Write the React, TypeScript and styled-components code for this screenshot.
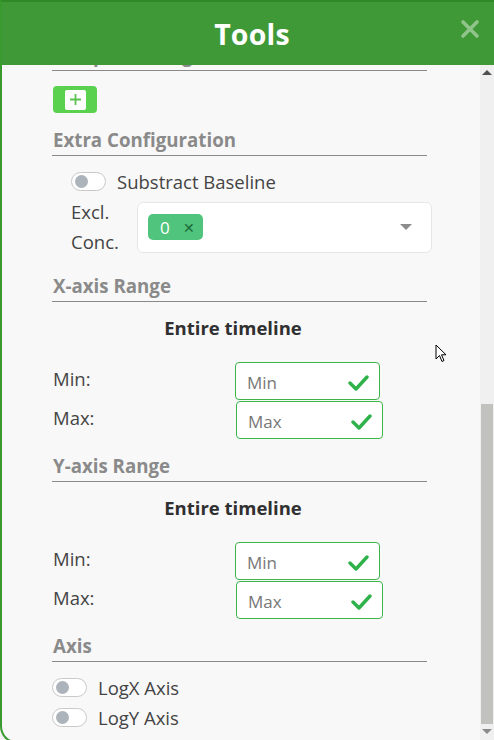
import React, { useLayoutEffect, useRef } from "react";
import styled, { createGlobalStyle } from "styled-components";

const Global = createGlobalStyle`
  html, body { margin: 0; padding: 0; overflow: hidden; background: #f4f4f4; }
  body { font-family: "Open Sans", "Noto Sans", sans-serif; }
  * { box-sizing: border-box; }
`;

const Panel = styled.div`
  width: 494px;
  height: 744px;
  display: flex;
  flex-direction: column;
  border-left: 2px solid #3a9a30;
  border-top: 2px solid #2f8a25;
  border-bottom: 2px solid #3a9a30;
  border-bottom-left-radius: 18px;
  background: #f8f8f8;
  overflow: hidden;
  position: relative;
`;

const Header = styled.div`
  height: 63px;
  flex: none;
  background: #409937;
  display: flex;
  align-items: center;
  justify-content: center;
  position: relative;
`;

const Title = styled.h1`
  margin: 0;
  color: #ffffff;
  font-family: "Open Sans", sans-serif;
  font-weight: 700;
  font-size: 28.5px;
  letter-spacing: 0.2px;
  transform: translateX(4px);
`;

const Close = styled.button`
  position: absolute;
  right: 12px;
  top: 15px;
  width: 24px;
  height: 24px;
  padding: 0;
  border: none;
  background: none;
  display: flex;
  align-items: center;
  justify-content: center;
`;

const Body = styled.div`
  flex: 1;
  display: flex;
  min-height: 0;
`;

const Scroller = styled.div`
  flex: 1;
  overflow: hidden;
  padding: 0 53px 0 50px;
`;

const Track = styled.div`
  width: 14px;
  flex: none;
  background: #f0f0f0;
  display: flex;
  flex-direction: column;
  align-items: center;
  padding-bottom: 4px;
`;

const Arrow = styled.div<{ $down?: boolean }>`
  width: 14px;
  height: 14px;
  flex: none;
  display: flex;
  align-items: center;
  justify-content: center;
  &::after {
    content: "";
    border-left: 5px solid transparent;
    border-right: 5px solid transparent;
    ${(p) => (p.$down ? "border-top: 5px solid #8a8a8a;" : "border-bottom: 5px solid #505050;")}
  }
`;

const Spacer = styled.div`
  flex: 1;
`;

const Thumb = styled.div`
  width: 12px;
  height: 320px;
  background: #c1c1bd;
  flex: none;
`;

const Section = styled.h2<{ $mt: number }>`
  margin: ${(p) => p.$mt}px 0 0;
  font-size: 18.7px;
  line-height: 24px;
  font-weight: 700;
  color: #8a8a8a;
  padding: 3px 0 3px 1px;
  border-bottom: 1px solid #8a8a8a;
  white-space: nowrap;
`;

const AddButton = styled.button`
  margin-top: 15px;
  width: 44px;
  height: 27px;
  border: none;
  border-radius: 4px;
  background: #5bd150;
  display: flex;
  align-items: center;
  justify-content: center;
  padding: 0;
  margin-left: 1px;
`;

const AddInner = styled.span`
  width: 21px;
  height: 20px;
  border-radius: 2px;
  background: #ffffff;
  display: flex;
  align-items: center;
  justify-content: center;
`;

const SwitchRow = styled.label<{ $mt: number; $indent?: number }>`
  margin-top: ${(p) => p.$mt}px;
  margin-left: ${(p) => p.$indent ?? 0}px;
  display: flex;
  align-items: center;
  gap: 11px;
  height: 24px;
  font-size: 18.5px;
  color: #444;
`;

const Switch = styled.span`
  width: 35px;
  height: 19px;
  flex: none;
  border-radius: 10px;
  border: 1px solid #c9c9c9;
  background: #ffffff;
  display: flex;
  align-items: center;
  padding-left: 3px;
  &::before {
    content: "";
    width: 13px;
    height: 13px;
    border-radius: 50%;
    background: #adb3bb;
  }
`;

const ExclRow = styled.div`
  margin-top: 4px;
  margin-left: 19px;
  margin-right: -5px;
  display: flex;
  align-items: center;
  gap: 12px;
`;

const ExclLabel = styled.div`
  font-size: 18.5px;
  line-height: 30px;
  color: #444;
  width: 54px;
`;

const Select = styled.div`
  flex: 1;
  height: 51px;
  background: #ffffff;
  border: 1px solid #e6e6e6;
  border-radius: 6px;
  display: flex;
  align-items: center;
  padding: 0 19px 0 10px;
`;

const Chip = styled.span`
  width: 55px;
  height: 26px;
  border-radius: 5px;
  background: #50c37c;
  display: flex;
  align-items: center;
  padding-left: 12px;
  gap: 13px;
  color: #ffffff;
  font-size: 17px;
`;

const ChipX = styled.span`
  color: #1c6a37;
  font-size: 14px;
`;

const Caret = styled.span`
  margin-left: auto;
  border-left: 6px solid transparent;
  border-right: 6px solid transparent;
  border-top: 6px solid #8c8c8c;
`;

const Subtitle = styled.div`
  margin-top: 14px;
  text-align: center;
  font-size: 18.5px;
  line-height: 24px;
  font-weight: 700;
  color: #303030;
  padding-right: 13px;
`;

const RangeGrid = styled.div`
  margin-top: 22px;
  display: grid;
  grid-template-columns: 183px 1fr;
  row-gap: 1px;
  align-items: center;
`;

const RangeLabel = styled.div`
  font-size: 18.5px;
  color: #444;
  padding-left: 1px;
  margin-bottom: 5px;
`;

const InputBox = styled.div<{ $w: number; $dx: number }>`
  width: ${(p) => p.$w}px;
  margin-left: ${(p) => p.$dx}px;
  height: 38px;
  border: 1px solid #3cb44a;
  border-radius: 4px;
  background: #ffffff;
  display: flex;
  align-items: center;
  padding: 3px 10px 0 11px;
  font-size: 17px;
  color: #777;
`;

const Check = styled.span`
  margin-left: auto;
  display: flex;
`;

const Cursor = styled.svg`
  position: absolute;
  left: 433px;
  top: 342px;
`;

const CheckIcon = () => (
  <Check>
    <svg width="21" height="17" viewBox="0 0 21 17">
      <path d="M2 9 L8 15 L19 3" fill="none" stroke="#2fb24a" strokeWidth="3.4" strokeLinecap="round" strokeLinejoin="round" />
    </svg>
  </Check>
);

const Range = ({ sizes }: { sizes: [number, number, number, number] }) => (
  <RangeGrid>
    <RangeLabel>Min:</RangeLabel>
    <InputBox $w={sizes[0]} $dx={sizes[1]}>
      Min
      <CheckIcon />
    </InputBox>
    <RangeLabel>Max:</RangeLabel>
    <InputBox $w={sizes[2]} $dx={sizes[3]}>
      Max
      <CheckIcon />
    </InputBox>
  </RangeGrid>
);

export default function App() {
  const ref = useRef<HTMLDivElement>(null);
  useLayoutEffect(() => {
    if (ref.current) ref.current.scrollTop = 34;
  }, []);
  return (
    <>
      <Global />
      <Panel>
        <Header>
          <Title>Tools</Title>
          <Close aria-label="close">
            <svg width="20" height="20" viewBox="0 0 20 20">
              <path d="M3 3 L17 17 M17 3 L3 17" stroke="rgba(255,255,255,0.42)" strokeWidth="3.6" strokeLinecap="round" />
            </svg>
          </Close>
        </Header>
        <Body>
          <Scroller ref={ref}>
            <Section $mt={9}>Sample Settings</Section>
            <AddButton aria-label="add">
              <AddInner>
                <svg width="13" height="13" viewBox="0 0 13 13">
                  <path d="M6.5 1 V12 M1 6.5 H12" stroke="#5bc352" strokeWidth="1.8" />
                </svg>
              </AddInner>
            </AddButton>
            <Section $mt={12}>Extra Configuration</Section>
            <SwitchRow $mt={13} $indent={19}>
              <Switch />
              Substract Baseline
            </SwitchRow>
            <ExclRow>
              <ExclLabel>
                Excl.
                <br />
                Conc.
              </ExclLabel>
              <Select>
                <Chip>
                  0<ChipX>✕</ChipX>
                </Chip>
                <Caret />
              </Select>
            </ExclRow>
            <Section $mt={14}>X-axis Range</Section>
            <Subtitle>Entire timeline</Subtitle>
            <Range sizes={[145, 0, 147, 1]} />
            <Section $mt={12}>Y-axis Range</Section>
            <Subtitle>Entire timeline</Subtitle>
            <Range sizes={[145, 0, 147, 1]} />
            <Section $mt={12}>Axis</Section>
            <SwitchRow $mt={13}>
              <Switch />
              LogX Axis
            </SwitchRow>
            <SwitchRow $mt={6}>
              <Switch />
              LogY Axis
            </SwitchRow>
            <div style={{ height: 40 }} />
          </Scroller>
          <Track>
            <Arrow />
            <Spacer />
            <Thumb />
            <Arrow $down />
          </Track>
        </Body>
        <Cursor width="12" height="19" viewBox="0 0 12 19">
          <path d="M1 1 L1 15 L4.5 11.5 L7 17.5 L9 16.5 L6.5 10.8 L11 10.8 Z" fill="#fff" stroke="#000" strokeWidth="1" />
        </Cursor>
      </Panel>
    </>
  );
}
